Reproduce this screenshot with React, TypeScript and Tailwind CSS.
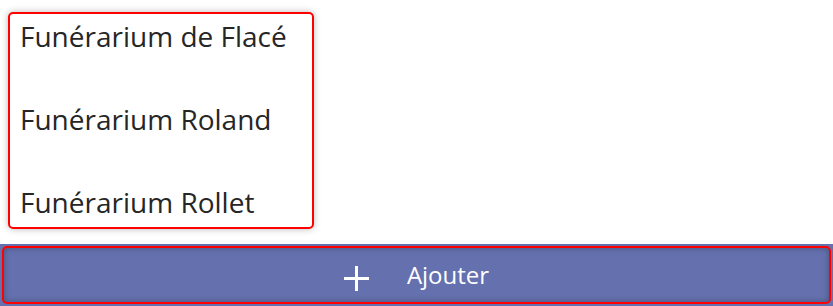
import React from "react";

const items = ["Funérarium de Flacé", "Funérarium Roland", "Funérarium Rollet"];

export default function App() {
  return (
    <div className="w-[833px] h-[306px] bg-white flex flex-col overflow-hidden" style={{ fontFamily: '"Open Sans", "Noto Sans", sans-serif' }}>
      <div className="pl-2 pt-3 h-[244px]">
        <div className="w-[306px] h-[217px] rounded-[5px] border-2 border-[#ff0000] shadow-[0_0_7px_rgba(0,0,0,0.28)] flex flex-col pl-[10px]">
          {items.map((name) => (
            <div key={name} className="h-[83px] shrink-0 text-[28px] leading-[44px] text-[#262626]">
              {name}
            </div>
          ))}
        </div>
      </div>
      <div className="h-[62px] bg-[#6571ae] p-[2px]">
        <button className="w-full h-full rounded-[5px] border-2 border-[#ff0000] bg-[#6571ae] shadow-[inset_0_0_6px_rgba(0,0,0,0.3)] flex items-center justify-center gap-[38px] text-white">
          <svg width="25" height="25" viewBox="0 0 25 25" className="mt-[6px]">
            <path d="M12.5 0v25M0 12.5h25" stroke="white" strokeWidth="3" />
          </svg>
          <span className="text-[24px] leading-none">Ajouter</span>
        </button>
      </div>
    </div>
  );
}
